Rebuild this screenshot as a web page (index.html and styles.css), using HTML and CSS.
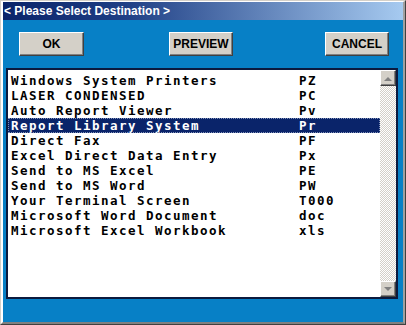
FILE: index.html
```html
<!DOCTYPE html>
<html>
<head>
<meta charset="utf-8">
<link rel="stylesheet" href="styles.css">
</head>
<body>
<div class="window">
  <div class="frame">
    <div class="titlebar">&lt; Please Select Destination &gt;</div>
    <div class="client">
      <div class="buttons">
        <button class="btn btn-ok">OK</button>
        <button class="btn btn-preview">PREVIEW</button>
        <button class="btn btn-cancel">CANCEL</button>
      </div>
      <div class="listbox">
        <div class="rows">
          <div class="row"><span class="name">Windows System Printers</span><span class="code">PZ</span></div>
          <div class="row"><span class="name">LASER CONDENSED</span><span class="code">PC</span></div>
          <div class="row"><span class="name">Auto Report Viewer</span><span class="code">Pv</span></div>
          <div class="row selected"><span class="name">Report Library System</span><span class="code">Pr</span></div>
          <div class="row"><span class="name">Direct Fax</span><span class="code">PF</span></div>
          <div class="row"><span class="name">Excel Direct Data Entry</span><span class="code">Px</span></div>
          <div class="row"><span class="name">Send to MS Excel</span><span class="code">PE</span></div>
          <div class="row"><span class="name">Send to MS Word</span><span class="code">PW</span></div>
          <div class="row"><span class="name">Your Terminal Screen</span><span class="code">T000</span></div>
          <div class="row"><span class="name">Microsoft Word Document</span><span class="code">doc</span></div>
          <div class="row"><span class="name">Microsoft Excel Workbook</span><span class="code">xls</span></div>
        </div>
        <div class="scrollbar">
          <div class="sbtn"><svg width="8" height="5" viewBox="0 0 8 5"><path d="M0 5 L4 1 L8 5 Z" fill="#808080"/></svg></div>
          <div class="track"></div>
          <div class="sbtn"><svg width="8" height="5" viewBox="0 0 8 5"><path d="M0 0 L8 0 L4 4 Z" fill="#808080"/></svg></div>
        </div>
      </div>
    </div>
  </div>
</div>
</body>
</html>
```

FILE: styles.css
```css
* { box-sizing: border-box; }
html, body { margin: 0; padding: 0; background: #D4D0C8; }

.window {
  width: 406px;
  height: 325px;
  border-style: solid;
  border-width: 1px;
  border-color: #D4D0C8 #404040 #404040 #D4D0C8;
}
.frame {
  height: 100%;
  display: flex;
  flex-direction: column;
  border-style: solid;
  border-width: 1px 2px 2px 2px;
  border-color: #FFFFFF #A0A0A0 #808080 #FFFFFF;
}
.titlebar {
  height: 18px;
  flex: none;
  background: linear-gradient(to right, #0A246A 0%, #1E3E84 30%, #A6CAF0 100%);
  color: #FFFFFF;
  font-family: "Liberation Sans", Arial, sans-serif;
  font-weight: bold;
  font-size: 12px;
  line-height: 18px;
  padding-left: 1px;
  white-space: nowrap;
}
.client {
  flex: 1;
  background: #0780C6;
  padding: 12px 5px 0 3px;
  display: flex;
  flex-direction: column;
}
.buttons {
  display: flex;
  height: 24px;
  padding-left: 13px;
}
.btn {
  height: 24px;
  margin: 0;
  padding: 0;
  background: #D4D0C8;
  border-style: solid;
  border-width: 1px;
  border-color: #FFFFFF #404040 #404040 #FFFFFF;
  box-shadow: inset -1px -1px 0 #808080;
  font-family: "Liberation Sans", Arial, sans-serif;
  font-weight: bold;
  font-size: 12px;
  color: #000000;
}
.btn-ok { width: 65px; }
.btn-preview { width: 64px; margin-left: 85px; }
.btn-cancel { width: 64px; margin-left: 92px; }

.listbox {
  margin-top: 12px;
  height: 231px;
  border: 2px solid #0B1A3E;
  background: #FFFFFF;
  display: flex;
}
.rows {
  flex: 1;
  padding-top: 3px;
}
.row {
  height: 15px;
  display: flex;
  align-items: center;
  padding-left: 3px;
  font-family: "DejaVu Sans Mono", monospace;
  font-weight: bold;
  font-size: 12.5px;
  letter-spacing: 1.47px;
  color: #000000;
  white-space: nowrap;
}
.row.selected {
  background: #0A246A;
  color: #FFFFFF;
  outline: 1px dotted #8090B8;
  outline-offset: -1px;
}
.name { width: 288px; flex: none; }
.code { flex: none; }

.scrollbar {
  width: 16px;
  flex: none;
  display: flex;
  flex-direction: column;
  background-color: #FFFFFF;
  background-image: repeating-conic-gradient(#D4D0C8 0 25%, #FFFFFF 0 50%);
  background-size: 2px 2px;
}
.sbtn {
  height: 16px;
  flex: none;
  background: #D4D0C8;
  border-style: solid;
  border-width: 1px;
  border-color: #FFFFFF #404040 #404040 #FFFFFF;
  box-shadow: inset -1px -1px 0 #808080;
  display: flex;
  align-items: center;
  justify-content: center;
}
.track { flex: 1; }
```
